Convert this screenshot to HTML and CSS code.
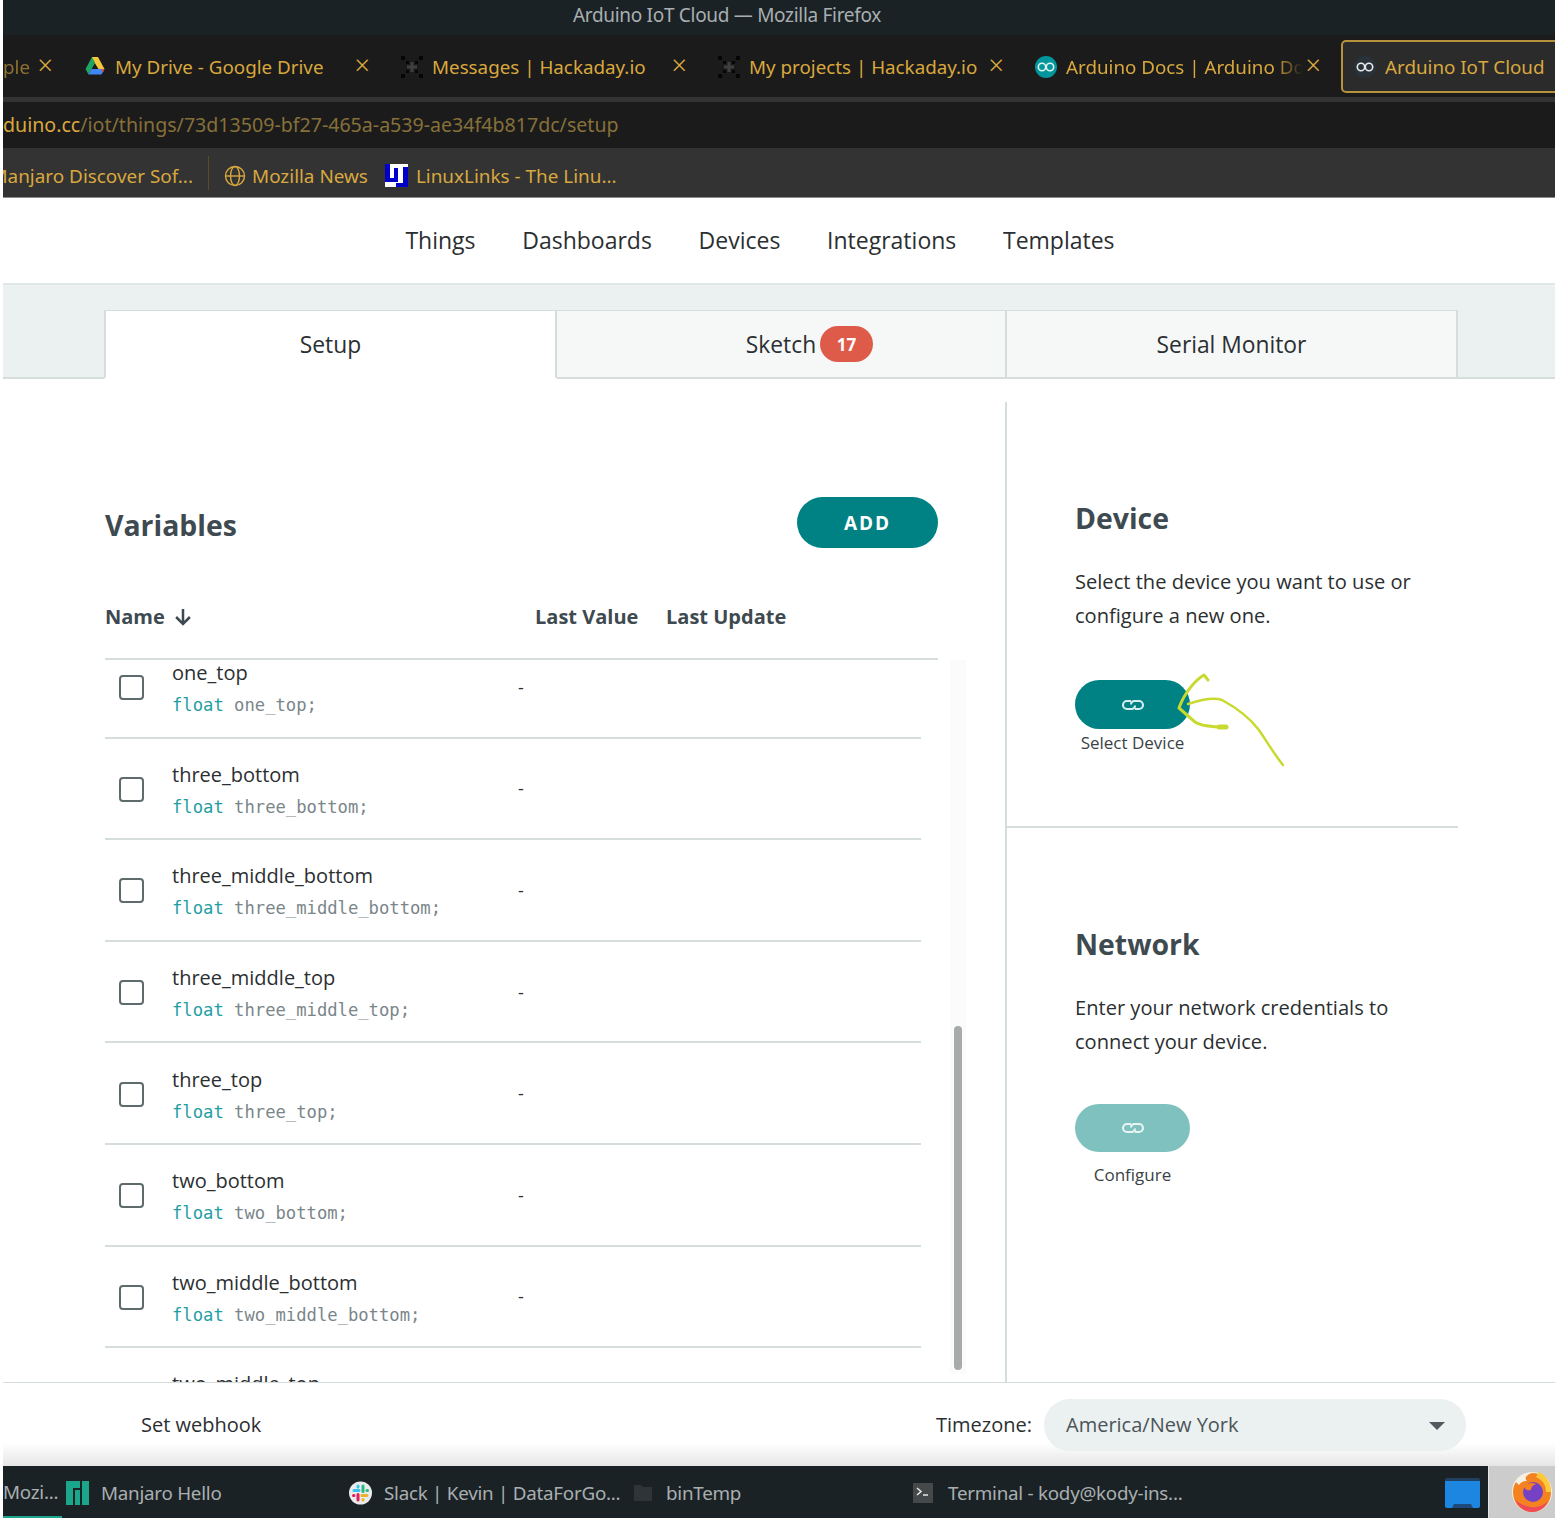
FILE: index.html
```html
<!DOCTYPE html>
<html lang="en">
<head>
    <meta charset="UTF-8">
    <meta name="viewport" content="width=device-width, initial-scale=1.0">
    <title>Arduino IoT Cloud</title>
    <link rel="stylesheet" href="styles.css">
</head>
<body>
<div class="shot">
    <!-- firefox window chrome -->
    <div class="titlebar">Arduino IoT Cloud — Mozilla Firefox</div>
    <div class="tabbar">
        <div class="tab tab-cut"><span class="tab-text">ple</span><span class="tab-x">×</span></div>
        <div class="tab">
            <svg class="fav" viewBox="0 0 22 22"><path d="M8 1h6l6.500 12h-6L8 2.500z" fill="#f5c63a"/><path d="M8 1L1.500 13l3 5.500L11 7z" fill="#1fa463"/><path d="M7.500 13h13l-3 5.500h-13z" fill="#4285f4"/><path d="M20.500 13H17l2 3.500z" fill="#d9483b"/></svg>
            <span class="tab-text">My Drive - Google Drive</span><span class="tab-x">×</span>
        </div>
        <div class="tab">
            <svg class="fav" viewBox="0 0 22 22"><path d="M0 0h4v4H0zM18 0h4v4h-4zM0 18h4v4H0zM18 18h4v4h-4zM5 5h3v3H5zM14 5h3v3h-3zM5 14h3v3H5zM14 14h3v3h-3z" fill="#060606"/><path d="M9.500 6h3v3.500H16v3h-3.500V16h-3v-3.500H6v-3h3.500z" fill="#3f3f3f"/></svg>
            <span class="tab-text">Messages | Hackaday.io</span><span class="tab-x">×</span>
        </div>
        <div class="tab">
            <svg class="fav" viewBox="0 0 22 22"><path d="M0 0h4v4H0zM18 0h4v4h-4zM0 18h4v4H0zM18 18h4v4h-4zM5 5h3v3H5zM14 5h3v3h-3zM5 14h3v3H5zM14 14h3v3h-3z" fill="#060606"/><path d="M9.500 6h3v3.500H16v3h-3.500V16h-3v-3.500H6v-3h3.500z" fill="#3f3f3f"/></svg>
            <span class="tab-text">My projects | Hackaday.io</span><span class="tab-x">×</span>
        </div>
        <div class="tab">
            <svg class="fav" viewBox="0 0 22 22"><circle cx="11" cy="11" r="11" fill="#00979c"/><g fill="none" stroke="#e4f4f4" stroke-width="1.600"><circle cx="7" cy="11" r="3.700"/><circle cx="15" cy="11" r="3.700"/></g></svg>
            <span class="tab-text tab-fade">Arduino Docs | Arduino Docs</span><span class="tab-x">×</span>
        </div>
        <div class="tab tab-active">
            <svg class="fav" viewBox="0 0 22 22"><circle cx="11" cy="11" r="11" fill="#283238"/><g fill="none" stroke="#e8ecec" stroke-width="1.600"><circle cx="7" cy="11" r="3.700"/><circle cx="15" cy="11" r="3.700"/></g></svg>
            <span class="tab-text">Arduino IoT Cloud</span>
        </div>
    </div>
    <div class="tabbar-gap"></div>
    <div class="urlbar"><span class="url-host">duino.cc</span>/iot/things/73d13509-bf27-465a-a539-ae34f4b817dc/setup</div>
    <div class="bookmarks">
        <div class="bm-cut"><span>Manjaro Discover Sof...</span></div>
        <span class="bm-sep"></span>
        <svg class="bm-ico" viewBox="0 0 22 22"><g fill="none" stroke="#d9a83e" stroke-width="1.400"><circle cx="11" cy="11" r="9.500"/><ellipse cx="11" cy="11" rx="4.500" ry="9.500"/><path d="M1.500 11h19"/></g></svg>
        <span>Mozilla News</span>
        <svg class="bm-ico bm-ll" viewBox="0 0 23 23"><path d="M0 0h23v23H0z" fill="#fff"/><path d="M0 0h5v14h4V4h4v14H0zM18 3h5v20H11v-4h7z" fill="#0000c8"/></svg>
        <span>LinuxLinks - The Linu...</span>
    </div>

    <!-- arduino app -->
    <div class="appnav">
        <a>Things</a><a>Dashboards</a><a>Devices</a><a>Integrations</a><a>Templates</a>
    </div>
    <div class="tabstrip">
        <div class="ptab ptab-on">Setup</div>
        <div class="ptab ptab-mid">Sketch<span class="badge">17</span></div>
        <div class="ptab">Serial Monitor</div>
    </div>

    <div class="main">
        <div class="vars">
            <div class="vars-head">
                <h2>Variables</h2>
                <button class="add-btn">ADD</button>
            </div>
            <div class="table-head">
                <span class="col-name">Name
                    <svg class="sort" viewBox="0 0 16 16"><path d="M8 1.500v12M2.500 8L8 13.500 13.500 8" fill="none" stroke="#3e4a50" stroke-width="2"/></svg>
                </span>
                <span class="col-value">Last Value</span>
                <span>Last Update</span>
            </div>
            <div class="list">
                <div class="list-inner">
                    <div class="row"><span class="check"></span><div class="var"><div class="var-name">one_top</div><code><b>float</b> one_top;</code></div><span class="dash">-</span></div>
                    <div class="row"><span class="check"></span><div class="var"><div class="var-name">three_bottom</div><code><b>float</b> three_bottom;</code></div><span class="dash">-</span></div>
                    <div class="row"><span class="check"></span><div class="var"><div class="var-name">three_middle_bottom</div><code><b>float</b> three_middle_bottom;</code></div><span class="dash">-</span></div>
                    <div class="row"><span class="check"></span><div class="var"><div class="var-name">three_middle_top</div><code><b>float</b> three_middle_top;</code></div><span class="dash">-</span></div>
                    <div class="row"><span class="check"></span><div class="var"><div class="var-name">three_top</div><code><b>float</b> three_top;</code></div><span class="dash">-</span></div>
                    <div class="row"><span class="check"></span><div class="var"><div class="var-name">two_bottom</div><code><b>float</b> two_bottom;</code></div><span class="dash">-</span></div>
                    <div class="row"><span class="check"></span><div class="var"><div class="var-name">two_middle_bottom</div><code><b>float</b> two_middle_bottom;</code></div><span class="dash">-</span></div>
                    <div class="row"><span class="check"></span><div class="var"><div class="var-name">two_middle_top</div><code><b>float</b> two_middle_top;</code></div><span class="dash">-</span></div>
                </div>
                <div class="scroll-track"><div class="scroll-thumb"></div></div>
            </div>
        </div>

        <div class="side">
            <section class="side-block side-device">
                <h3>Device</h3>
                <p>Select the device you want to use or<br>configure a new one.</p>
                <div class="link-wrap">
                    <button class="link-btn">
                        <svg class="link-ico" viewBox="0 0 24 12"><g fill="none" stroke="#d5eeee" stroke-width="2.100"><path d="M10 2H6a4 4 0 0 0 0 8h5a3.500 3.500 0 0 0 3-3.500"/><path d="M14 10h4a4 4 0 0 0 0-8h-5a3.500 3.500 0 0 0-3 3.500"/></g></svg>
                    </button>
                    <div class="link-label">Select Device</div>
                </div>
            </section>
            <section class="side-block side-network">
                <h3>Network</h3>
                <p>Enter your network credentials to<br>connect your device.</p>
                <div class="link-wrap">
                    <button class="link-btn link-btn-off">
                        <svg class="link-ico" viewBox="0 0 24 12"><g fill="none" stroke="#e6f5f4" stroke-width="2.100"><path d="M10 2H6a4 4 0 0 0 0 8h5a3.500 3.500 0 0 0 3-3.500"/><path d="M14 10h4a4 4 0 0 0 0-8h-5a3.500 3.500 0 0 0-3 3.500"/></g></svg>
                    </button>
                    <div class="link-label link-label-low">Configure</div>
                </div>
            </section>
        </div>
    </div>

    <div class="footer">
        <span class="webhook">Set webhook</span>
        <span class="tz-label">Timezone:</span>
        <div class="tz-select">America/New York<span class="tz-arrow"></span></div>
    </div>

    <div class="taskbar">
        <span class="task task-first">Mozi...</span>
        <span class="task task-hello">
            <svg class="task-ico" viewBox="0 0 23 24"><path d="M0 0h14v7H7v17H0zM9 9h5v15H9zM16 0h7v24h-7z" fill="#1ba68c"/></svg>
            Manjaro Hello
        </span>
        <span class="task task-slack">
            <svg class="task-ico" viewBox="0 0 23 23"><circle cx="11.500" cy="11.500" r="11.500" fill="#e8ecec"/><path d="M5 9h5M9 4.500v1" stroke="#36c5f0" stroke-width="3" stroke-linecap="round"/><path d="M14 4.500V10M18.500 9h-.5" stroke="#2eb67d" stroke-width="3" stroke-linecap="round"/><path d="M18 14h-5M14 18.500v-.5" stroke="#ecb22e" stroke-width="3" stroke-linecap="round"/><path d="M9 18.500V13M4.500 14H5" stroke="#e01e5a" stroke-width="3" stroke-linecap="round"/></svg>
            Slack | Kevin | DataForGo...
        </span>
        <span class="task task-bin">
            <svg class="task-ico task-ico-sm" viewBox="0 0 18 16"><path d="M0 0h7l2 2h9v14H0z" fill="#2f3537"/></svg>
            binTemp
        </span>
        <span class="task task-term">
            <svg class="task-ico task-ico-term" viewBox="0 0 20 20"><path d="M0 0h20v20H0z" fill="#46494a"/><path d="M4 5l4 3.500L4 12" fill="none" stroke="#e8e8e8" stroke-width="1.500"/><path d="M10 12h5" stroke="#e8e8e8" stroke-width="1.500"/></svg>
            Terminal - kody@kody-ins...
        </span>
        <svg class="tray-folder" viewBox="0 0 35 30"><path d="M0 2a2 2 0 0 1 2-2h31a2 2 0 0 1 2 2v3H0z" fill="#22405f"/><path d="M0 3h35v25a2 2 0 0 1-2 2H2a2 2 0 0 1-2-2z" fill="#1c86e0"/><path d="M7 30l2-4h17l2 4z" fill="#1d4a78"/></svg>
        <div class="tray-firefox">
            <svg class="ff" viewBox="0 0 42 42"><circle cx="21" cy="21" r="20" fill="#f7f0e4"/><path d="M21 2a19 19 0 0 1 19 19c0 12-9 20-19 20S2 33 2 21c0-4 1-7 3-10l3 3c2-3 5-4 8-4-3-3-1-6 5-8z" fill="#f58220"/><path d="M28 1c8 4 12 11 12 20h-5c0-7-3-12-10-15z" fill="#fcc93a"/><path d="M4 28c3 8 10 13 17 13s13-4 16-11c-5 5-11 7-17 6-6-1-12-3-16-8z" fill="#ee4a5a"/><circle cx="22" cy="21" r="10" fill="#7542c5"/><path d="M12 15c4-3 9-4 13-2-3 1-5 3-5 6-4 1-6-1-8-4z" fill="#f58220"/></svg>
        </div>
    </div>

    <!-- hand drawn arrow on top of the screenshot -->
    <svg class="scribble" viewBox="0 0 120 100">
        <path d="M36 9L32 4C25 8 13 20 7 37L23 51C29 55 39 56 53 56" fill="none" stroke="#c8da30" stroke-width="3" stroke-linecap="round" stroke-linejoin="round"/>
        <path d="M47 56h7" fill="none" stroke="#c8da30" stroke-width="5" stroke-linecap="round"/>
        <path d="M16 33C28 29 41 26 50 29C63 36 77 46 87 59C95 71 103 84 111 94" fill="none" stroke="#c8da30" stroke-width="2.500" stroke-linecap="round"/>
    </svg>
</div>
</body>
</html>
```

FILE: styles.css
```css
:root {
    --chrome-dark: #1b1b1b;
    --chrome-mid: #333333;
    --panel-dark: #1b2225;
    --gold: #d9a83e;
    --teal: #008184;
    --line: #d5dddd;
    --mist: #ebf0f0;
    --ink: #3e4a50;
}

html, body {
    margin: 0;
    background: #fff;
}

body {
    font-family: "Open Sans", sans-serif;
    color: #2b2f31;
}

.shot {
    position: relative;
    width: 1552px;
    height: 1518px;
    margin-left: 3px;
    overflow: hidden;
    display: flex;
    flex-direction: column;
    background: #fff;
}

/* firefox */
.titlebar {
    height: 35px;
    line-height: 31px;
    background: var(--panel-dark);
    color: #a9afb1;
    text-align: center;
    font-family: "Noto Sans", sans-serif;
    font-size: 19px;
    letter-spacing: -0.3px;
    padding-right: 104px;
    box-sizing: border-box;
}

.tabbar {
    height: 62px;
    display: flex;
    align-items: center;
    background: var(--chrome-dark);
    font-family: "Noto Sans", sans-serif;
    font-size: 18.8px;
    color: var(--gold);
}

.tab {
    position: relative;
    flex: none;
    width: 317px;
    height: 53px;
    padding: 1px 19px 0 12px;
    box-sizing: border-box;
    display: flex;
    align-items: center;
    white-space: nowrap;
}

.tab-cut {
    width: 69px;
    padding-left: 0;
}

.tab-cut .tab-text {
    opacity: 0.6;
}

.fav {
    flex: none;
    width: 22px;
    height: 22px;
    margin-right: 9px;
}

.tab-text {
    overflow: hidden;
}

.tab-fade {
    width: 237px;
    -webkit-mask-image: linear-gradient(to right, #000 88%, transparent);
    mask-image: linear-gradient(to right, #000 88%, transparent);
}

.tab-x {
    margin-left: auto;
    font-size: 27px;
    font-weight: 300;
    line-height: 1;
    margin-top: -4px;
}

.tab-active {
    margin-left: 1px;
    width: 230px;
    border: 2px solid #b8913c;
    border-radius: 5px;
    background: #2b2b2b;
    padding-left: 11px;
}

.tabbar-gap {
    height: 5px;
    background: var(--chrome-mid);
}

.urlbar {
    height: 46px;
    line-height: 46px;
    background: var(--chrome-dark);
    color: #86703a;
    font-family: "Noto Sans", sans-serif;
    font-size: 19.6px;
    white-space: nowrap;
}

.url-host {
    color: var(--gold);
}

.bookmarks {
    height: 50px;
    padding-top: 6px;
    border-bottom: 1px solid #8b8b8b;
    box-sizing: border-box;
    display: flex;
    align-items: center;
    background: var(--chrome-mid);
    color: var(--gold);
    font-family: "Noto Sans", sans-serif;
    font-size: 18.9px;
    white-space: nowrap;
}

/* the first bookmark is cut by the left window edge */
.bm-cut {
    width: 190px;
    overflow: hidden;
    display: flex;
    justify-content: flex-end;
}

.bm-sep {
    width: 1px;
    height: 34px;
    margin: -6px 15px 0;
    background: #5a4c2a;
}

.bm-ico {
    width: 22px;
    height: 22px;
    margin-right: 6px;
}

.bm-ll {
    width: 23px;
    height: 23px;
    margin: -1px 8px 0 17px;
}

/* app navigation */
.appnav {
    height: 85px;
    padding: 0 38px 2px 0;
    display: flex;
    align-items: center;
    justify-content: center;
    gap: 46.700px;
    box-sizing: border-box;
    font-size: 23px;
}

.tabstrip {
    height: 96px;
    box-sizing: border-box;
    padding: 25px 0 0 101px;
    display: flex;
    background: var(--mist);
    border-top: 2px solid #e0e7e7;
    border-bottom: 2px solid var(--line);
}

.ptab {
    position: relative;
    width: 451px;
    height: 69px;
    margin-bottom: -2px;
    box-sizing: border-box;
    border: 2px solid var(--line);
    border-top-width: 1px;
    border-left-width: 0;
    background: #f6f8f8;
    display: flex;
    align-items: center;
    justify-content: center;
    font-size: 22.800px;
}

.ptab-on {
    width: 453px;
    border-left-width: 2px;
    border-bottom-color: #fff;
    background: #fff;
}

.ptab-mid {
    width: 450px;
}

.badge {
    position: absolute;
    left: 263px;
    top: 15px;
    width: 53px;
    height: 36px;
    border-radius: 18px;
    background: #de5b4a;
    color: #fff;
    font-size: 17px;
    font-weight: 700;
    display: flex;
    align-items: center;
    justify-content: center;
}

/* main area */
.main {
    flex: 1;
    min-height: 0;
    display: flex;
}

.vars {
    width: 1002px;
    padding: 118px 0 0 102px;
    box-sizing: border-box;
    display: flex;
    flex-direction: column;
}

.vars-head {
    width: 833px;
    height: 51px;
    display: flex;
    align-items: center;
    justify-content: space-between;
}

.vars-head h2 {
    margin: 4px 0 0;
    font-size: 28.400px;
    font-weight: 700;
    color: var(--ink);
}

.add-btn {
    width: 141px;
    height: 51px;
    border: 0;
    border-radius: 26px;
    background: var(--teal);
    color: #fff;
    font-family: inherit;
    font-size: 19px;
    font-weight: 700;
    letter-spacing: 2px;
}

.table-head {
    width: 833px;
    height: 112px;
    box-sizing: border-box;
    display: flex;
    align-items: center;
    padding-top: 27px;
    border-bottom: 2px solid var(--line);
    font-size: 20px;
    font-weight: 700;
    color: var(--ink);
}

.col-name {
    width: 430px;
    display: flex;
    align-items: center;
    gap: 8px;
}

.col-value {
    width: 131px;
}

.sort {
    width: 20px;
    height: 20px;
    margin-top: 1px;
}

.list {
    position: relative;
    flex: 1;
    min-height: 0;
    overflow: hidden;
}

/* list is scrolled a little, the first row is cut at the top */
.list-inner {
    margin-top: -23px;
}

.row {
    width: 816px;
    height: 101.6px;
    box-sizing: border-box;
    display: flex;
    align-items: center;
    padding-left: 14px;
    border-bottom: 2px solid var(--line);
}

.check {
    flex: none;
    width: 25px;
    height: 25px;
    margin-top: 2px;
    box-sizing: border-box;
    border: 2px solid #5f6a6c;
    border-radius: 4px;
    background: #fff;
}

.var {
    width: 346px;
    margin-left: 28px;
    padding-top: 4px;
    flex: none;
}

.var-name {
    font-size: 20px;
    line-height: 33px;
}

code {
    display: block;
    font-family: "DejaVu Sans Mono", monospace;
    font-size: 17.200px;
    line-height: 32px;
    color: #7a868a;
}

code b {
    font-weight: 400;
    color: #1f9ea3;
}

.dash {
    font-size: 18px;
}

.scroll-track {
    position: absolute;
    top: 0;
    left: 845px;
    width: 16px;
    height: 714px;
    background: #fbfbfb;
}

.scroll-thumb {
    position: absolute;
    top: 366px;
    left: 4px;
    width: 8px;
    height: 344px;
    border-radius: 4px;
    background: #a8abab;
}

/* right column */
.side {
    width: 453px;
    margin-top: 23px;
    box-sizing: border-box;
    border-left: 2px solid var(--line);
}

.side-block {
    padding-left: 68px;
}

.side-device {
    height: 426px;
    box-sizing: border-box;
    border-bottom: 2px solid var(--line);
}

.side-block h3 {
    margin: 0;
    padding-top: 97px;
    font-size: 28.400px;
    line-height: 38px;
    font-weight: 700;
    color: var(--ink);
}

.side-block p {
    margin: 28px 0 0 0;
    font-size: 20.100px;
    line-height: 34px;
}

.link-wrap {
    width: 115px;
    margin-top: 47px;
    text-align: center;
}

.side-network .link-wrap {
    margin-top: 45px;
}

.link-btn {
    display: flex;
    align-items: center;
    justify-content: center;
    width: 115px;
    height: 49px;
    border: 0;
    border-radius: 25px;
    background: var(--teal);
}

.link-btn-off {
    height: 48px;
    background: #7fc1be;
}

.link-ico {
    width: 24px;
    height: 12px;
}

.link-label {
    margin: 2px -20px 0;
    font-size: 17px;
    line-height: 24px;
    color: #3b4245;
}

.link-label-low {
    margin-top: 11px;
}

/* footer */
.footer {
    height: 84px;
    box-sizing: border-box;
    display: flex;
    align-items: center;
    border-top: 1px solid var(--line);
    padding: 0 89px 0 138px;
    background: linear-gradient(to bottom, #fff 72%, #e6e6e6 100%);
    font-size: 20px;
}

.webhook {
    margin-right: auto;
}

.tz-label {
    margin-right: 12px;
}

.tz-select {
    position: relative;
    width: 422px;
    height: 52px;
    line-height: 52px;
    padding-left: 22px;
    box-sizing: border-box;
    border-radius: 26px;
    background: var(--mist);
    color: #4b5559;
}

.tz-arrow {
    position: absolute;
    right: 21px;
    top: 23px;
    border-style: solid;
    border-width: 8px 8px 0;
    border-color: #50595d transparent transparent;
}

/* desktop panel */
.taskbar {
    position: relative;
    height: 52px;
    display: flex;
    align-items: center;
    background: var(--panel-dark);
    color: #a9afb1;
    font-family: "Noto Sans", sans-serif;
    font-size: 18.800px;
    letter-spacing: -0.25px;
    white-space: nowrap;
}

.task {
    display: flex;
    align-items: center;
    padding-top: 1px;
}

.task-first {
    width: 59px;
    height: 100%;
    box-sizing: border-box;
    border-bottom: 2px solid #1ba68c;
}

.task-hello {
    margin-left: 4px;
    width: 283px;
}

.task-slack {
    width: 285px;
}

.task-bin {
    width: 279px;
}

.task-ico {
    width: 23px;
    height: 24px;
    margin-right: 12px;
}

.task-ico-sm {
    width: 18px;
    height: 16px;
    margin-right: 14px;
}

.task-ico-term {
    width: 20px;
    height: 20px;
    margin-right: 15px;
}

.tray-folder {
    position: absolute;
    left: 1442px;
    top: 12px;
    width: 35px;
    height: 30px;
}

.tray-firefox {
    position: absolute;
    right: 0;
    top: 0;
    width: 67px;
    height: 52px;
    box-sizing: border-box;
    border-left: 1px solid #e6e6e6;
    background: #cccccc;
}

.ff {
    position: absolute;
    left: 22px;
    top: 5px;
    width: 42px;
    height: 42px;
}

.scribble {
    position: absolute;
    left: 1169px;
    top: 671px;
    width: 120px;
    height: 100px;
}
```
